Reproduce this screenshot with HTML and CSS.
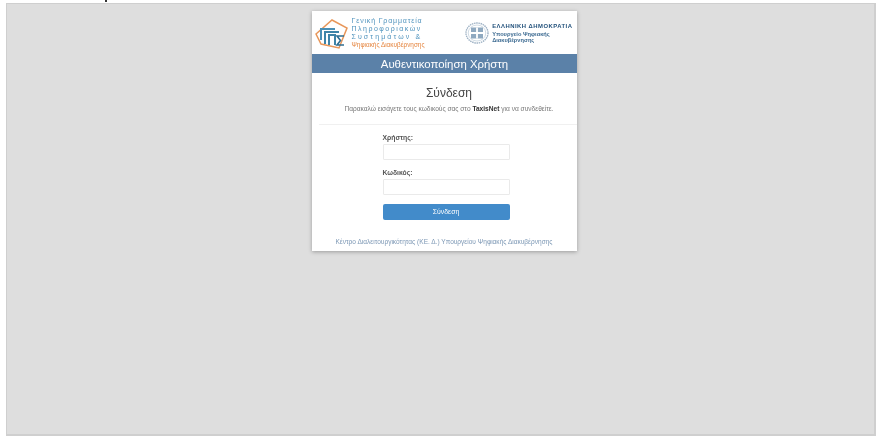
FILE: index.html
```html
<!DOCTYPE html>
<html lang="el">
<head>
<meta charset="utf-8">
<title>Αυθεντικοποίηση Χρήστη</title>
<link rel="stylesheet" href="styles.css">
</head>
<body>
<span class="clip-mark"></span>
<main class="frame">
  <section class="card">
    <header class="logos">
      <div class="gg">
        <svg class="gg-icon" viewBox="0 0 33 30" width="33" height="30" aria-hidden="true">
          <path d="M1 15 L17 1 L32 9 L24 29 L6 25 Z" fill="none" stroke="#e8975a" stroke-width="1.5"/>
          <path d="M6 21 V10 H20" fill="none" stroke="#4a8fb5" stroke-width="2"/>
          <path d="M10 25 V13 H24" fill="none" stroke="#3f84a8" stroke-width="2"/>
          <path d="M14 26 V16 H20 V26" fill="none" stroke="#3f84a8" stroke-width="2"/>
          <path d="M29 17 H22 L25.5 21.5 L22 26 H29" fill="none" stroke="#2f6f93" stroke-width="1.6"/>
        </svg>
        <div class="gg-text">
          <span class="gg-line">Γενική Γραμματεία</span>
          <span class="gg-line wide">Πληροφοριακών</span>
          <span class="gg-line wider">Συστημάτων &amp;</span>
          <span class="gg-line orange">Ψηφιακής Διακυβέρνησης</span>
        </div>
      </div>
      <div class="gov">
        <svg class="gov-icon" viewBox="0 0 24 22" width="24" height="22" aria-hidden="true">
          <ellipse cx="12" cy="11" rx="11" ry="10" fill="none" stroke="#9db1c4" stroke-width="1.4" stroke-dasharray="1.5 .7"/>
          <ellipse cx="12" cy="11" rx="8.8" ry="8" fill="none" stroke="#bccbd8" stroke-width=".7"/>
          <rect x="6" y="5.5" width="12" height="11" fill="#8fa9c0"/>
          <path d="M12 5.5 V16.5 M6 11 H18" stroke="#fff" stroke-width="1.8"/>
        </svg>
        <div class="gov-text">
          <span class="gov-title">ΕΛΛΗΝΙΚΗ ΔΗΜΟΚΡΑΤΙΑ</span>
          <span class="gov-sub">Υπουργείο Ψηφιακής</span>
          <span class="gov-sub">Διακυβέρνησης</span>
        </div>
      </div>
    </header>
    <div class="bar">Αυθεντικοποίηση Χρήστη</div>
    <div class="intro">
      <h1 class="title">Σύνδεση</h1>
      <p class="hint">Παρακαλώ εισάγετε τους κωδικούς σας στο <b>TaxisNet</b> για να συνδεθείτε.</p>
    </div>
    <form class="form">
      <label class="label" for="u">Χρήστης:</label>
      <input class="input" id="u" type="text">
      <label class="label" for="p">Κωδικός:</label>
      <input class="input" id="p" type="password">
      <button class="btn" type="button">Σύνδεση</button>
    </form>
    <footer class="foot">Κέντρο Διαλειτουργικότητας (ΚΕ. Δ.) Υπουργείου Ψηφιακής Διακυβέρνησης</footer>
  </section>
</main>
</body>
</html>
```
FILE: styles.css
```css
* { box-sizing: border-box; }
html, body { margin: 0; height: 100%; background: #fff; overflow: hidden; }
body { padding: 3px 4px 9px 6px; font-family: "Liberation Sans", Arial, sans-serif; position: relative; }
.clip-mark { position: absolute; left: 105px; top: 0; width: 2px; height: 2px; background: #333; }
.frame {
  height: 433px;
  background: #dedede;
  border: 1px solid #cfcfcf;
  border-width: 1px 2px 2px 1px;
  display: flex;
  justify-content: center;
  align-items: flex-start;
  padding-top: 7px;
  padding-left: 7px;
}
.card {
  width: 265px;
  height: 240px;
  background: #fff;
  box-shadow: 0 1px 4px rgba(0,0,0,.3);
  display: flex;
  flex-direction: column;
  filter: blur(.45px);
}
.logos { height: 43px; display: flex; justify-content: space-between; align-items: center; padding: 0 4px 0 3px; }
.gg { display: flex; align-items: center; gap: 4px; }
.gg-icon { display: block; flex: none; margin-top: 3px; }
.gg-text { display: flex; flex-direction: column; font-size: 7px; line-height: 8px; color: #4f93bd; margin-top: 1px; }
.gg-line { white-space: nowrap; letter-spacing: .83px; }
.gg-line.wide { letter-spacing: 1.5px; }
.gg-line.wider { letter-spacing: 2.1px; }
.gg-line.orange { color: #e5853f; letter-spacing: 0; font-size: 6.4px; }
.gov { display: flex; align-items: center; gap: 3px; }
.gov-icon { display: block; flex: none; }
.gov-text { display: flex; flex-direction: column; color: #23527c; }
.gov-title { font-size: 5.9px; font-weight: 700; letter-spacing: .5px; line-height: 9px; white-space: nowrap; }
.gov-sub { font-size: 5.7px; font-weight: 700; line-height: 6px; color: #3d6b92; }
.bar { height: 19px; background: #5b81a8; color: #fff; font-size: 11.4px; line-height: 20px; text-align: center; padding-left: 1px; }
.intro { height: 52px; text-align: center; border-bottom: 1px solid #f0f0f0; margin-left: 7px; padding-left: 3px; }
.title { margin: 0; padding-top: 13px; font-size: 12px; line-height: 15px; font-weight: 400; color: #444; }
.hint { margin: 4px 0 0; font-size: 6.6px; line-height: 8px; color: #777; white-space: nowrap; }
.hint b { color: #333; }
.form { display: flex; flex-direction: column; width: 127px; margin: 8px 0 0 71px; }
.label { font-size: 6.8px; font-weight: 700; line-height: 9px; color: #555; margin-bottom: 2px; }
.input { width: 127px; height: 16px; border: 1px solid #eaeaea; border-radius: 1px; background: #fff; margin-bottom: 8px; padding: 0; outline: 0; }
.btn { width: 127px; height: 16px; border: 0; border-radius: 2px; background: #428bca; color: #fff; font: 400 6.9px/16px "Liberation Sans", sans-serif; padding: 0; margin-top: 1px; }
.foot { margin-top: 18px; text-align: center; font-size: 6.55px; line-height: 8px; color: #7d98b5; white-space: nowrap; }
```
